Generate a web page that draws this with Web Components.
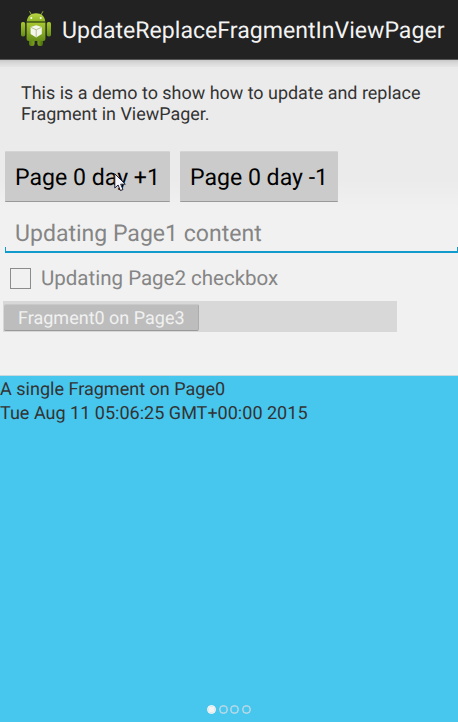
<!DOCTYPE html>
<html lang="en"><head><meta charset="utf-8"><title>UpdateReplaceFragmentInViewPager</title>
<style>html,body{margin:0;height:100%}body{font-family:Roboto,sans-serif;overflow:hidden;text-rendering:geometricPrecision}</style></head>
<body><demo-app></demo-app>
<script>
function define(name, html) {
  const template = document.createElement('template');
  template.innerHTML = html;
  customElements.define(name, class extends HTMLElement {
    constructor() {
      super();
      this.attachShadow({mode: 'open'}).append(template.content.cloneNode(true));
    }
  });
}

define('robot-icon', `<style>:host{display:block;width:32px;height:36px}svg{display:block}</style>
<svg width="32" height="36" viewBox="0 0 32 36">
<defs>
<linearGradient id="g" x1="0" y1="0" x2="0" y2="1"><stop offset="0" stop-color="#a9c92f"/><stop offset="1" stop-color="#658d18"/></linearGradient>
<linearGradient id="h" x1="0" y1="0" x2="0" y2="1"><stop offset="0" stop-color="#b9d546"/><stop offset="1" stop-color="#8fb524"/></linearGradient>
<linearGradient id="l" x1="0" y1="0" x2="1" y2="0"><stop offset="0" stop-color="#567b12"/><stop offset=".5" stop-color="#85ad22"/><stop offset="1" stop-color="#486b0c"/></linearGradient>
</defs>
<path d="M9.700 .6L11.500 3.800M22.800 .6L21 3.800" stroke="#8eae31" stroke-width="1" stroke-linecap="round"/>
<path d="M9 28h5.600v4.800q0 2.200-2.200 2.200h-1.200q-2.200 0-2.200-2.200zM17.400 28H23v4.800q0 2.200-2.200 2.200h-1.200q-2.200 0-2.200-2.200z" fill="url(#l)"/>
<rect x="1" y="11" width="4.200" height="14.500" rx="1.800" fill="url(#g)"/><rect x="26.800" y="11" width="4.200" height="14.500" rx="1.800" fill="url(#g)"/>
<path d="M6.800 10.400C7.200 5.200 11 2.300 16 2.300s8.800 2.900 9.200 8.100z" fill="url(#h)"/>
<path d="M6.600 11.400h18.800v16.600q0 2-2 2H8.600q-2 0-2-2z" fill="url(#g)"/>
<path d="M6.600 10.900h18.800" stroke="#4d6c15" stroke-width=".9"/>
<circle cx="11.300" cy="7" r="1" fill="#fff"/><circle cx="20.700" cy="7" r="1" fill="#fff"/>
<path d="M16.200 14.200l5.600 1.900v7L16.200 26.600l-5.600-3.500v-7z" fill="#f5f6ed"/>
<path d="M10.800 16.300L16.200 18.800l5.400-2.500M16.200 18.800v7.500" fill="none" stroke="#aebd88" stroke-width=".9"/>
</svg>`);

define('action-bar', `<style>:host{display:flex;box-sizing:border-box;height:60px;padding-left:20px;align-items:flex-start;background:#222;border-bottom:1px solid #555;color:#f3f3f3}
robot-icon{margin-top:11px}.title{margin-left:10px;font-size:23.100px;line-height:28px;padding-top:17px;white-space:nowrap}</style>
<robot-icon></robot-icon><div class="title"><slot></slot></div>`);

define('push-button', `<style>:host{display:flex;box-sizing:border-box;height:51px;align-items:center;justify-content:center;background:#cbcbcb;border-top:1px solid #d4d4d4;border-bottom:1px solid #999;border-radius:1px;color:#000;font-size:23.100px;line-height:28px;white-space:nowrap;padding-top:2px}</style><slot></slot>`);

define('text-field', `<style>:host{display:block;height:43px;margin-left:5px;position:relative;color:#858585;font-size:23.050px;line-height:28px;white-space:nowrap}
.t{padding:10px 0 0 10px}.u{position:absolute;left:0;right:0;bottom:0;box-sizing:border-box;height:6px;border:solid #119bcc;border-width:0 1px 2px 1px}</style><div class="t"><slot></slot></div><div class="u"></div>`);

define('check-item', `<style>:host{display:flex;align-items:center;height:24px;padding-left:10px;gap:10px;color:#858585;font-size:20.500px;white-space:nowrap;line-height:24px}
i{width:21px;height:21px;box-sizing:border-box;border:1px solid #8c8c8c}span{padding-top:2px}</style><i></i><span><slot></slot></span>`);

define('fragment-bar', `<style>:host{display:flex;box-sizing:border-box;width:394px;height:31px;margin-left:3px;padding:3px 0 0 1px;background:#d8d8d8}
div{width:195px;height:27px;box-sizing:border-box;padding:1px 0 0 14px;background:#bdbdbd;border-top:1px solid #c9c9c9;border-bottom:1px solid #999;border-right:1px solid #acacac;border-radius:2px;color:#f1f1f1;font-size:18px;line-height:26px;white-space:nowrap}</style><div><slot></slot></div>`);

define('page-dots', `<style>:host{display:flex;gap:2.700px;justify-content:center}i{box-sizing:border-box;width:9px;height:9px;border:1.500px solid #c8dce4;border-radius:50%;box-shadow:inset 0 0 0 .5px #c8dce4}.on{background:#f4f4f4;border-color:#f4f4f4}</style><i class="on"></i><i></i><i></i><i></i>`);

define('pager-view', `<style>:host{display:flex;flex-direction:column;justify-content:space-between;box-sizing:border-box;background:#47c6ee;border-top:1px solid #c7d9df;color:#333;font-size:18.050px;line-height:24px;white-space:nowrap;padding:2px 0 8px}</style><div><slot></slot></div><page-dots></page-dots>`);

define('mouse-pointer', `<style>:host{display:block;position:absolute;left:114px;top:173px}svg{display:block}</style>
<svg width="13" height="20" viewBox="0 0 13 20"><path d="M.8.8V15l3.300-3 2.300 5.600 2.600-1.100-2.300-5.300h4.600z" fill="#f6f6fa" stroke="#1b2033" stroke-width="1"/></svg>`);

define('demo-app', `<style>:host{display:flex;flex-direction:column;width:458px;height:722px;position:relative;background:linear-gradient(#ebebeb 0 180px,#f1f1f1 212px)}
.shade{height:7px;background:linear-gradient(#c9c9c9,#d8d8d8 40%,#e5e5e5)}
.intro{padding:16px 0 0 21px;height:68px;color:#333;font-size:17.950px;line-height:21px;white-space:nowrap}
.row{display:flex;gap:10px;padding-left:5px}.a{width:165px}.b{width:158px}
text-field{margin-top:8px}check-item{margin-top:13px}fragment-bar{margin-top:11px}pager-view{margin-top:43px;flex:1}</style>
<action-bar>UpdateReplaceFragmentInViewPager</action-bar>
<div class="shade"></div>
<div class="intro">This is a demo to show how to update and replace<br>Fragment in ViewPager.</div>
<div class="row"><push-button class="a">Page 0 day +1</push-button><push-button class="b">Page 0 day -1</push-button></div>
<text-field>Updating Page1 content</text-field>
<check-item>Updating Page2 checkbox</check-item>
<fragment-bar>Fragment0 on Page3</fragment-bar>
<pager-view>A single Fragment on Page0<br>Tue Aug 11 05:06:25 GMT+00:00 2015</pager-view>
<mouse-pointer></mouse-pointer>`);
</script></body></html>
